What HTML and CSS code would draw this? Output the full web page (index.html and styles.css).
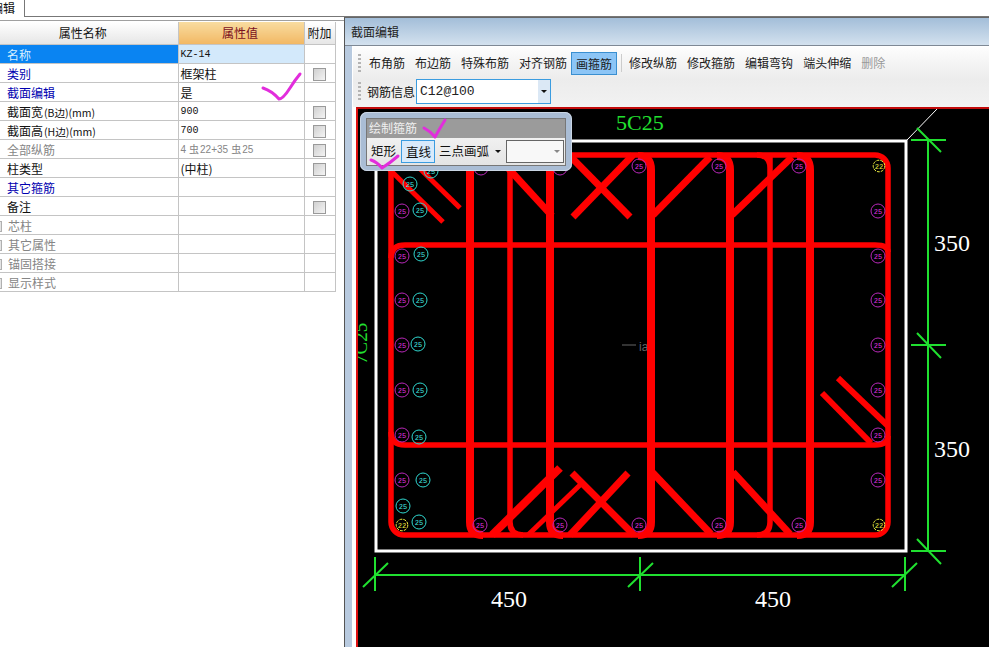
FILE: index.html
```html
<!DOCTYPE html>
<html lang="zh-CN">
<head>
    <meta charset="UTF-8">
    <meta name="viewport" content="width=device-width, initial-scale=1.0">
    <title>截面编辑</title>
    <link rel="stylesheet" href="styles.css">
</head>
<body>
    <div class="tabstrip">
        <div class="tab"><span class="tab-text">编辑</span></div>
    </div>

    <div class="main">
        <div class="props">
            <table class="prop-table">
                <colgroup>
                    <col class="col-name">
                    <col class="col-value">
                    <col class="col-extra">
                </colgroup>
                <tr class="head">
                    <th class="head-name">属性名称</th>
                    <th class="head-active">属性值</th>
                    <th>附加</th>
                </tr>
                <tr>
                    <td class="selected">名称</td>
                    <td class="selected-value mono">KZ-14</td>
                    <td></td>
                </tr>
                <tr>
                    <td class="link">类别</td>
                    <td>框架柱</td>
                    <td><span class="check"></span></td>
                </tr>
                <tr>
                    <td class="link">截面编辑</td>
                    <td>是</td>
                    <td></td>
                </tr>
                <tr>
                    <td>截面宽<span class="small">(B边)(mm)</span></td>
                    <td class="mono">900</td>
                    <td><span class="check"></span></td>
                </tr>
                <tr>
                    <td>截面高<span class="small">(H边)(mm)</span></td>
                    <td class="mono">700</td>
                    <td><span class="check"></span></td>
                </tr>
                <tr>
                    <td class="muted">全部纵筋</td>
                    <td class="muted small-value">4<span class="bar">虫</span>22+35<span class="bar">虫</span>25</td>
                    <td><span class="check"></span></td>
                </tr>
                <tr>
                    <td>柱类型</td>
                    <td>(中柱)</td>
                    <td><span class="check"></span></td>
                </tr>
                <tr>
                    <td class="link">其它箍筋</td>
                    <td></td>
                    <td></td>
                </tr>
                <tr>
                    <td>备注</td>
                    <td></td>
                    <td><span class="check"></span></td>
                </tr>
                <tr>
                    <td class="muted"><span class="expander"></span>芯柱</td>
                    <td></td>
                    <td></td>
                </tr>
                <tr>
                    <td class="muted"><span class="expander"></span>其它属性</td>
                    <td></td>
                    <td></td>
                </tr>
                <tr>
                    <td class="muted"><span class="expander"></span>锚固搭接</td>
                    <td></td>
                    <td></td>
                </tr>
                <tr>
                    <td class="muted"><span class="expander"></span>显示样式</td>
                    <td></td>
                    <td></td>
                </tr>
            </table>
        </div>

        <div class="editor">
            <div class="editor-title">截面编辑</div>
            <div class="editor-body">
                <div class="toolbar">
                    <span class="grip"></span>
                    <span class="tool">布角筋</span>
                    <span class="tool">布边筋</span>
                    <span class="tool">特殊布筋</span>
                    <span class="tool">对齐钢筋</span>
                    <span class="tool tool-on">画箍筋</span>
                    <span class="sep"></span>
                    <span class="tool">修改纵筋</span>
                    <span class="tool">修改箍筋</span>
                    <span class="tool">编辑弯钩</span>
                    <span class="tool">端头伸缩</span>
                    <span class="tool tool-off">删除</span>
                </div>
                <div class="toolbar toolbar-info">
                    <span class="grip"></span>
                    <span class="info-label">钢筋信息</span>
                    <div class="combo">
                        <span class="combo-text">C12@100</span>
                        <span class="combo-btn"><span class="arrow"></span></span>
                    </div>
                </div>

                <div class="canvas">
                    <svg class="drawing" viewBox="358 109 631 538" width="631" height="538">
                        <defs>
                            <g id="m"><circle r="7" fill="none" stroke="#b828b8"/><text class="bar-no" fill="#e030e0" y="2.5">25</text></g>
                            <g id="c"><circle r="7" fill="none" stroke="#30d8d0"/><text class="bar-no" fill="#40e8e0" y="2.5">25</text></g>
                            <g id="y"><circle r="5.8" fill="none" stroke="#f0f040" stroke-dasharray="3 1"/><text class="bar-no" fill="#f0f040" y="2.5">22</text></g>
                        </defs>

                        <rect x="376" y="141" width="530" height="410" fill="none" stroke="#fff" stroke-width="3"/>
                        <path d="M907 140 937 109" stroke="#fff" fill="none"/>

                        <text class="bar-label" x="616" y="130">5C25</text>
                        <text class="bar-label-side" transform="translate(367,364) rotate(-90)">7C25</text>
                        <path d="M622 345H636" stroke="#666"/>
                        <text class="center-mark" x="639" y="351">ia</text>

                        <!-- 箍筋 -->
                        <g fill="none" stroke="#f00" stroke-width="5.5">
                            <rect x="391" y="155" width="497" height="380" rx="13"/>
                            <path d="M391 258Q391 245 405 245H875Q888 245 888 252"/>
                            <path d="M391 432Q391 445 405 445H875Q888 445 888 436"/>
                            <path d="M510 155V522Q510 535 523 535"/>
                            <path d="M770 168Q770 155 757 155M770 155V522Q770 535 757 535"/>
                        </g>
                        <g fill="none" stroke="#f00" stroke-width="8">
                            <path d="M483 156Q470 156 470 170V522Q470 535 483 535"/>
                            <path d="M563 156Q550 156 550 170V522Q550 535 563 535"/>
                            <path d="M638 156Q651 156 651 170V522Q651 535 638 535"/>
                            <path d="M717 156Q730 156 730 170V522Q730 535 717 535"/>
                            <path d="M797 156Q810 156 810 170V522Q810 535 797 535"/>
                        </g>

                        <!-- 弯钩 -->
                        <g fill="none" stroke="#f00" stroke-width="5">
                            <path d="M384 164 443 222"/>
                            <path d="M406 155 460 208"/>
                            <path d="M528 535 580 485"/>
                        </g>
                        <g fill="none" stroke="#f00" stroke-width="7">
                            <path d="M497 156 552 216"/>
                            <path d="M653 215 710 157"/>
                            <path d="M732 215 792 157"/>
                            <path d="M573 217 633 155"/>
                            <path d="M630 217 569 155"/>
                            <path d="M572 473 634 535"/>
                            <path d="M628 473 570 535"/>
                            <path d="M652 472 711 534"/>
                            <path d="M733 472 790 534"/>
                        </g>
                        <path d="M492 535 560 468" fill="none" stroke="#f00" stroke-width="8"/>
                        <g fill="none" stroke="#f00" stroke-width="6">
                            <path d="M838 378 888 426"/>
                            <path d="M822 393 871 443"/>
                        </g>

                        <!-- 纵筋 -->
                        <use href="#m" x="402" y="211"/>
                        <use href="#m" x="402" y="256"/>
                        <use href="#m" x="402" y="300"/>
                        <use href="#m" x="402" y="345"/>
                        <use href="#m" x="402" y="390"/>
                        <use href="#m" x="402" y="435"/>
                        <use href="#m" x="402" y="480"/>
                        <use href="#m" x="481" y="168"/>
                        <use href="#m" x="560" y="168"/>
                        <use href="#m" x="639" y="166"/>
                        <use href="#m" x="719" y="166"/>
                        <use href="#m" x="799" y="166"/>
                        <use href="#m" x="878" y="211"/>
                        <use href="#m" x="878" y="256"/>
                        <use href="#m" x="878" y="300"/>
                        <use href="#m" x="878" y="345"/>
                        <use href="#m" x="878" y="390"/>
                        <use href="#m" x="878" y="435"/>
                        <use href="#m" x="878" y="480"/>
                        <use href="#m" x="480" y="525"/>
                        <use href="#m" x="560" y="525"/>
                        <use href="#m" x="639" y="525"/>
                        <use href="#m" x="719" y="525"/>
                        <use href="#m" x="799" y="525"/>
                        <use href="#c" x="431" y="171"/>
                        <use href="#c" x="410" y="184"/>
                        <use href="#c" x="420" y="210"/>
                        <use href="#c" x="421" y="254"/>
                        <use href="#c" x="420" y="300"/>
                        <use href="#c" x="418" y="344"/>
                        <use href="#c" x="420" y="390"/>
                        <use href="#c" x="419" y="437"/>
                        <use href="#c" x="423" y="480"/>
                        <use href="#c" x="403" y="506"/>
                        <use href="#c" x="419" y="522"/>
                        <use href="#y" x="879" y="166"/>
                        <use href="#y" x="402" y="525"/>
                        <use href="#y" x="879" y="525"/>

                        <!-- 标注 -->
                        <g fill="none" stroke="#20e030" stroke-width="2">
                            <path d="M928 140V551"/>
                            <path d="M911 140H946M917 128 941 152"/>
                            <path d="M911 345H946M917 333 941 358"/>
                            <path d="M911 551H946M917 539 941 564"/>
                            <path d="M375 575H905"/>
                            <path d="M375 557V591M363 587 388 563"/>
                            <path d="M640 557V591M628 587 653 563"/>
                            <path d="M905 557V591M892 587 917 563"/>
                        </g>
                        <text class="dim" x="934" y="251">350</text>
                        <text class="dim" x="934" y="457">350</text>
                        <text class="dim" x="491" y="607">450</text>
                        <text class="dim" x="755" y="607">450</text>
                    </svg>

                    <div class="float-panel">
                        <div class="float-inner">
                            <div class="float-title">绘制箍筋</div>
                            <div class="float-tools">
                                <span class="ftool ftool-first">矩形</span>
                                <span class="ftool ftool-on">直线</span>
                                <span class="ftool">三点画弧</span>
                                <span class="arrow arrow-menu"></span>
                                <div class="float-combo"><span class="arrow arrow-gray"></span></div>
                            </div>
                        </div>
                    </div>
                </div>
            </div>
        </div>
    </div>

    <!-- 手写的对勾标记 -->
    <svg class="marks" viewBox="0 0 989 647" width="989" height="647">
        <g fill="none" stroke="#e22ddc" stroke-width="3" stroke-linecap="round" stroke-linejoin="round">
            <path d="M263 88Q272 91 279 99Q283 99 290 88Q295 80 300 74"/>
            <path d="M424 128Q430 131 435 137Q440 128 445 120"/>
            <path d="M371 160Q377 162 382 168Q390 163 398 156"/>
        </g>
    </svg>
</body>
</html>
```

FILE: styles.css
```css
html, body {
    margin: 0;
    padding: 0;
}

body {
    position: relative;
    width: 989px;
    height: 647px;
    overflow: hidden;
    background-color: #fff;
    color: #111;
    font-family: "Noto Sans CJK SC", "Liberation Sans", sans-serif;
    font-size: 12px;
}

/* 顶部页签 */
.tabstrip {
    height: 16px;
    border-bottom: 1px solid #777;
    background-color: #fff;
}

.tab {
    box-sizing: border-box;
    width: 25px;
    height: 17px;
    overflow: hidden;
    background-color: #fff;
    border-right: 1px solid #777;
    line-height: 16px;
    white-space: nowrap;
}

.tab-text {
    margin-left: -9px;
}

.main {
    display: flex;
    height: 630px;
}

/* 属性表 */
.props {
    box-sizing: border-box;
    width: 344px;
    height: 627px;
    margin-top: 3px;
    padding-top: 1px;
    border-top: 1px solid #a0a0a0;
    background-color: #fff;
}

.prop-table {
    width: 335px;
    table-layout: fixed;
    border-collapse: collapse;
}

.col-name {
    width: 178px;
}

.col-value {
    width: 126px;
}

.col-extra {
    width: 31px;
}

.prop-table th,
.prop-table td {
    box-sizing: border-box;
    height: 19px;
    padding: 2px 0 0;
    border: 1px solid #c4c4c4;
    font-weight: normal;
    line-height: 16px;
    white-space: nowrap;
    overflow: hidden;
}

.prop-table td:first-child {
    padding-left: 7px;
    border-left: none;
}

.prop-table td:nth-child(2) {
    padding-left: 2px;
}

.prop-table td:last-child {
    text-align: center;
}

.prop-table .head th {
    height: 22px;
    padding-top: 0;
    background: linear-gradient(#fff, #e6e6e6);
    border-top: none;
    text-align: center;
}

.prop-table .head th.head-name {
    padding-right: 12px;
    border-left: none;
}

.prop-table .head th.head-active {
    padding-right: 2px;
    background: linear-gradient(#f8dca0, #f2b864);
    color: #7a0f1e;
}

.prop-table .selected {
    background-color: #0a84f2;
    color: #d8f0ff;
}

.prop-table .selected-value {
    background-color: #d3e9fb;
}

.link {
    color: #0000b0;
}

.muted {
    color: #858585;
}

.small {
    margin-left: 1px;
    font-size: 10.5px;
    line-height: 1;
}

.mono {
    font-family: "Liberation Mono", monospace;
    font-size: 10px;
}

.small-value {
    font-size: 10px;
    font-family: "Liberation Sans", "Noto Sans CJK SC", sans-serif;
}

.bar {
    margin: 0 1px 0 3px;
    font-size: 10px;
    font-family: "Noto Sans CJK SC", sans-serif;
    line-height: 1;
}

.check {
    display: inline-block;
    box-sizing: border-box;
    width: 13px;
    height: 13px;
    margin-top: 2px;
    border: 1px solid #9a9a9a;
    background: linear-gradient(135deg, #d0d0d0, #f4f4f4);
    vertical-align: top;
}

.expander {
    display: inline-block;
    box-sizing: border-box;
    width: 11px;
    height: 11px;
    margin-left: -16px;
    margin-right: 6px;
    border: 1px solid #b0b0b0;
    background-color: #e4e4e4;
    vertical-align: top;
    margin-top: 3px;
}

/* 截面编辑窗口 */
.editor {
    display: flex;
    flex-direction: column;
    flex: 1;
    border-left: 1px solid #555;
    border-top: 1px solid #666;
    background-color: #b8cadf;
    min-width: 0;
}

.editor-title {
    box-sizing: border-box;
    height: 28px;
    padding: 0 6px;
    background: linear-gradient(#a3bed9, #d3e1ee);
    border-bottom: 1px solid #7e8894;
    line-height: 27px;
    color: #222;
}

.editor-body {
    flex: 1;
    display: flex;
    flex-direction: column;
    margin-left: 7px;
    padding-left: 4px;
    background: #fff;
    border-top: 1px solid #fff;
    min-height: 0;
}

.toolbar {
    display: flex;
    align-items: center;
    height: 32px;
    margin-left: -3px;
    padding-left: 5px;
    background: linear-gradient(#fdfdfd, #ececec);
}

.toolbar-info {
    align-items: flex-start;
    height: 28px;
    background: linear-gradient(#ececec, #f2f2f2);
}

.toolbar .grip {
    flex: none;
    width: 3px;
    height: 18px;
    margin-right: 3px;
    background: repeating-linear-gradient(#b4b4b4 0 2px, transparent 2px 4px);
}

.toolbar-info .grip {
    margin-top: 3px;
    margin-right: 6px;
}

.tool {
    padding: 0 5px;
    line-height: 20px;
    white-space: nowrap;
    color: #1b1b1b;
}

.tool-on {
    box-sizing: border-box;
    height: 23px;
    margin-left: -1px;
    padding: 0 4px;
    border: 1px solid #3a8fd0;
    background-color: #8cc5f6;
    line-height: 21px;
}

.tool-off {
    color: #999;
}

.sep {
    flex: none;
    width: 1px;
    height: 18px;
    margin: 0 2px 0 4px;
    background-color: #ccc;
}

.info-label {
    line-height: 25px;
    white-space: nowrap;
}

.combo {
    display: flex;
    box-sizing: border-box;
    width: 135px;
    height: 25px;
    margin-left: 1px;
    border: 1px solid #3a9ce0;
    background-color: #fff;
}

.combo-text {
    flex: 1;
    padding-left: 3px;
    font-family: "Liberation Mono", monospace;
    font-size: 13px;
    line-height: 23px;
    color: #222;
}

.combo-btn {
    display: flex;
    align-items: center;
    justify-content: center;
    width: 12px;
    background-color: #dbe8f5;
}

.arrow {
    display: inline-block;
    width: 0;
    height: 0;
    border-left: 3px solid transparent;
    border-right: 3px solid transparent;
    border-top: 3px solid #111;
}

/* 画布 */
.canvas {
    position: relative;
    flex: 1;
    border-top: 2px solid #c20a0a;
    border-left: 2px solid #e01010;
    background-color: #000;
    min-height: 0;
    overflow: hidden;
}

.drawing {
    display: block;
}

.bar-label {
    fill: #22e030;
    font-family: "Liberation Serif", serif;
    font-size: 22px;
}

.bar-label-side {
    fill: #22e030;
    font-family: "Liberation Serif", serif;
    font-size: 19px;
}

.dim {
    fill: #fff;
    font-family: "Liberation Serif", serif;
    font-size: 24px;
}

.bar-no {
    font-family: "Liberation Mono", monospace;
    font-size: 7px;
    text-anchor: middle;
}

.center-mark {
    fill: #666;
    font-family: "Liberation Sans", sans-serif;
    font-size: 12px;
}

/* 绘制箍筋浮动工具条 */
.float-panel {
    position: absolute;
    left: 2px;
    top: 3px;
    box-sizing: border-box;
    width: 212px;
    height: 59px;
    padding: 6px;
    border-radius: 7px;
    background-color: #aabdd5;
    box-shadow: 0 0 0 1px #c9d5e4 inset;
}

.float-inner {
    height: 46px;
    border: 1px solid #777;
    background: linear-gradient(#fafafa, #e4e4e4);
}

.float-title {
    height: 19px;
    padding-left: 2px;
    background-color: #9b9b9b;
    color: #f0f0f0;
    line-height: 18px;
}

.float-tools {
    display: flex;
    align-items: center;
    height: 26px;
    padding-left: 4px;
    font-size: 12.5px;
}

.ftool {
    padding: 0 4px;
    line-height: 22px;
    white-space: nowrap;
    color: #111;
}

.ftool-first {
    padding: 0 5px 0 0;
}

.ftool-on {
    box-sizing: border-box;
    width: 34px;
    height: 23px;
    padding: 0 4px;
    border: 1px solid #3a9ce0;
    background-color: #d8eafb;
    line-height: 21px;
}

.arrow-menu {
    margin: 0 5px 0 2px;
}

.float-combo {
    display: flex;
    align-items: center;
    justify-content: flex-end;
    box-sizing: border-box;
    width: 58px;
    height: 23px;
    padding-right: 3px;
    border: 1px solid #666;
    background-color: #f8f8f8;
}

.arrow-gray {
    border-top-color: #888;
}

/* 手写对勾盖在最上层 */
.marks {
    position: absolute;
    left: 0;
    top: 0;
    pointer-events: none;
}
```
